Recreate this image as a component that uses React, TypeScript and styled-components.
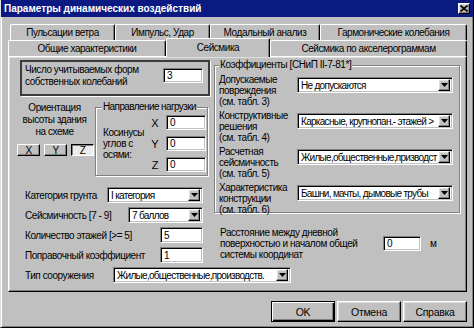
import React from 'react';
import styled, { createGlobalStyle, css } from 'styled-components';

const GlobalStyle = createGlobalStyle`
  html, body { margin: 0; padding: 0; background: #c0c0c0; }
  body { font-family: "Liberation Sans", Arial, sans-serif; font-size: 10px; letter-spacing: -0.45px; color: #000; }
  * { box-sizing: border-box; }
`;

const sunken = css`
  background: #fff;
  border: 1px solid;
  border-color: #808080 #fff #fff #808080;
  box-shadow: inset 1px 1px 0 #000, inset -1px -1px 0 #c0c0c0;
`;

const raised = css`
  background: #c0c0c0;
  border: 1px solid;
  border-color: #fff #000 #000 #fff;
  box-shadow: inset -1px -1px 0 #808080, inset 1px 1px 0 #dfdfdf;
`;

const Window = styled.div`
  width: 474px;
  height: 328px;
  background: #c0c0c0;
  display: flex;
  flex-direction: column;
  border-left: 1px solid #dfdfdf;
  border-right: 1px solid #000;
  border-bottom: 1px solid #000;
  box-shadow: inset 1px 0 0 #fff, inset -1px -1px 0 #808080;
  overflow: hidden;
`;

const TitleBar = styled.div`
  height: 17px;
  flex: none;
  background: #0a1a82;
  color: #fff;
  font-weight: bold;
  font-size: 10px;
  letter-spacing: 0;
  display: flex;
  align-items: center;
  justify-content: space-between;
  padding: 0 3px 0 3px;
`;

const CloseButton = styled.div`
  ${raised};
  width: 12px;
  height: 11px;
  display: flex;
  align-items: center;
  justify-content: center;
`;

const Body = styled.div`
  flex: 1;
  display: flex;
  flex-direction: column;
  padding: 7px 5px 0 7px;
`;

const TabRow = styled.div<{ $indent: number }>`
  display: flex;
  align-items: flex-end;
  height: 16px;
  padding-left: ${p => p.$indent}px;
`;

const Tab = styled.div<{ $w: number; $active?: boolean }>`
  width: ${p => p.$w}px;
  height: ${p => (p.$active ? 19 : 16)}px;
  margin-bottom: ${p => (p.$active ? -1 : 0)}px;
  position: ${p => (p.$active ? 'relative' : 'static')};
  z-index: ${p => (p.$active ? 2 : 'auto')};
  background: #c0c0c0;
  border-top: 1px solid #fff;
  border-left: 1px solid #fff;
  border-right: 1px solid #000;
  border-radius: 2px 2px 0 0;
  box-shadow: inset -1px 0 0 #808080;
  display: flex;
  align-items: center;
  justify-content: center;
  padding-bottom: ${p => (p.$active ? 2 : 0)}px;
  white-space: nowrap;
  font-size: 10px;
`;

const Panel = styled.div`
  width: 459px;
  height: 236px;
  flex: none;
  border-top: 1px solid #fff;
  border-left: 1px solid #fff;
  border-right: 1px solid #000;
  border-bottom: 1px solid #000;
  box-shadow: inset -1px -1px 0 #808080, inset 1px 1px 0 #dfdfdf;
  display: grid;
  grid-template-columns: 190px 246px;
  column-gap: 4px;
  row-gap: 4px;
  align-content: start;
  padding: 3px 0 0 11px;
`;

const Column = styled.div`
  display: flex;
  flex-direction: column;
`;

const FormsBox = styled.div`
  height: 36px;
  border: 2px solid #3c3c3c;
  box-shadow: 1px 1px 0 #fff;
  display: flex;
  justify-content: space-between;
  align-items: flex-start;
  padding: 2px 5px 0 3px;
`;

const Lines = styled.div<{ $lh?: number; $center?: boolean }>`
  line-height: ${p => p.$lh ?? 12}px;
  white-space: nowrap;
  text-align: ${p => (p.$center ? 'center' : 'left')};
`;

const TextField = styled.div<{ $w: number; $h?: number; $mt?: number }>`
  ${sunken};
  width: ${p => p.$w}px;
  height: ${p => p.$h ?? 15}px;
  margin-top: ${p => p.$mt ?? 0}px;
  flex: none;
  padding: 0 3px;
  display: flex;
  align-items: center;
`;

const ComboBox = styled.div<{ $w: number; $mt?: number }>`
  ${sunken};
  width: ${p => p.$w}px;
  height: 16px;
  margin-top: ${p => p.$mt ?? 0}px;
  flex: none;
  display: flex;
  align-items: center;
  padding: 2px 2px 2px 3px;
`;

const ComboValue = styled.span`
  flex: 1;
  overflow: hidden;
  white-space: nowrap;
  letter-spacing: -0.7px;
`;

const DropButton = styled.div`
  ${raised};
  width: 12px;
  height: 12px;
  flex: none;
  display: flex;
  align-items: center;
  justify-content: center;
`;

const MiddleRow = styled.div`
  display: flex;
  margin-top: 4px;
  height: 76px;
`;

const Orientation = styled.div`
  width: 78px;
  margin-left: -3px;
  display: flex;
  flex-direction: column;
  align-items: center;
  padding-top: 2px;
  padding-right: 3px;
`;

const AxisButtons = styled.div`
  display: flex;
  gap: 4px;
  margin-top: 6px;
  align-self: flex-start;
`;

const AxisButton = styled.div<{ $pressed?: boolean }>`
  width: 23px;
  height: 12px;
  display: flex;
  align-items: center;
  justify-content: center;
  border: 1px solid;
  ${p =>
    p.$pressed
      ? css`
          background: #ececec;
          border-color: #000 #fff #fff #000;
          box-shadow: inset 1px 1px 0 #808080;
        `
      : css`
          background: #c0c0c0;
          border-color: #fff #000 #000 #fff;
          box-shadow: inset -1px -1px 0 #808080;
        `}
`;

const Group = styled.fieldset<{ $w: number; $h?: number; $mt?: number }>`
  width: ${p => p.$w}px;
  ${p => (p.$h ? `height: ${p.$h}px;` : '')}
  margin: ${p => p.$mt ?? 0}px 0 0 0;
  border: 1px solid #808080;
  box-shadow: inset 1px 1px 0 #fff, 1px 1px 0 #fff;
  min-width: 0;
`;

const Legend = styled.legend`
  padding: 0 1px;
  line-height: 12px;
  background: #c0c0c0;
  white-space: nowrap;
`;

const DirectionGroup = styled(Group)`
  padding: 2px 4px 1px 6px;
  & > legend {
    letter-spacing: -0.6px;
  }
`;

const DirectionGrid = styled.div`
  display: grid;
  grid-template-columns: 42px 14px 40px;
  grid-template-rows: repeat(3, 15px);
  column-gap: 4px;
  row-gap: 6px;
`;

const CosinesText = styled(Lines)`
  grid-row: 1 / 4;
  grid-column: 1;
  align-self: center;
  padding-left: 1px;
`;

const AxisLetter = styled.div`
  grid-column: 2;
  display: flex;
  align-items: center;
  justify-content: center;
  font-size: 11px;
  letter-spacing: 0;
`;

const FieldRow = styled.div<{ $mt?: number }>`
  display: flex;
  align-items: center;
  justify-content: space-between;
  height: 16px;
  margin-top: ${p => p.$mt ?? 4}px;
  padding: 0 7px 0 5px;
  white-space: nowrap;
`;

const CoefGroup = styled(Group)`
  padding: 3px 6px 0 4px;
  display: flex;
  flex-direction: column;
  gap: 3px;
`;

const CoefRow = styled.div`
  display: grid;
  grid-template-columns: 78px 1fr;
  height: 33px;
  align-items: start;
`;

const DistanceRow = styled.div`
  display: flex;
  align-items: center;
  margin-top: 14px;
  padding-left: 6px;
`;

const DistanceText = styled(Lines)`
  width: 155px;
  margin-right: 8px;
`;

const Unit = styled.span`
  margin-left: 9px;
`;

const TypeRow = styled.div`
  grid-column: 1 / -1;
  display: flex;
  align-items: center;
  height: 16px;
  padding-left: 5px;
`;

const TypeLabel = styled.span`
  width: 88px;
`;

const ButtonBar = styled.div`
  display: flex;
  justify-content: flex-end;
  gap: 2px;
  margin-top: 9px;
  width: 459px;
`;

const DialogButton = styled.div<{ $default?: boolean }>`
  width: 64px;
  height: 21px;
  display: flex;
  align-items: center;
  justify-content: center;
  font-size: 10.5px;
  letter-spacing: -0.3px;
  background: #c0c0c0;
  border: 1px solid;
  ${p =>
    p.$default
      ? css`
          border-color: #000;
          box-shadow: inset 1px 1px 0 #fff, inset -1px -1px 0 #000, inset -2px -2px 0 #808080;
        `
      : css`
          border-color: #fff #000 #000 #fff;
          box-shadow: inset -1px -1px 0 #808080, inset 1px 1px 0 #dfdfdf;
        `}
`;

const Arrow = () => (
  <svg width="7" height="4" viewBox="0 0 7 4">
    <polygon points="0,0 7,0 3.5,4" fill="#000" />
  </svg>
);

const CloseIcon = () => (
  <svg width="8" height="7" viewBox="0 0 8 7">
    <path d="M0.5 0.5 L7.5 6.5 M7.5 0.5 L0.5 6.5" stroke="#000" strokeWidth="1.6" />
  </svg>
);

const Combo: React.FC<{ w: number; value: string; mt?: number }> = ({ w, value, mt }) => (
  <ComboBox $w={w} $mt={mt}>
    <ComboValue>{value}</ComboValue>
    <DropButton>
      <Arrow />
    </DropButton>
  </ComboBox>
);

const coefRows = [
  { label: ['Допускаемые', 'повреждения', '(см.  табл. 3)'], value: 'Не допускаются' },
  { label: ['Конструктивные', 'решения', '(см. табл. 4)'], value: 'Каркасные, крупнопан.- этажей >' },
  { label: ['Расчетная', 'сейсмичность', '(см. табл. 5)'], value: 'Жилые,общественные,призводст' },
  { label: ['Характеристика', 'конструкции', '(см. табл. 6)'], value: 'Башни, мачты, дымовые трубы' },
];

export default function App() {
  return (
    <>
      <GlobalStyle />
      <Window>
        <TitleBar>
          <span>Параметры динамических воздействий</span>
          <CloseButton>
            <CloseIcon />
          </CloseButton>
        </TitleBar>
        <Body>
          <TabRow $indent={2}>
            <Tab $w={105}>Пульсации ветра</Tab>
            <Tab $w={95}>Импульс, Удар</Tab>
            <Tab $w={110}>Модальный анализ</Tab>
            <Tab $w={147}>Гармонические колебания</Tab>
          </TabRow>
          <TabRow $indent={0}>
            <Tab $w={158}>Общие характеристики</Tab>
            <Tab $w={104} $active>
              Сейсмика
            </Tab>
            <Tab $w={197}>Сейсмика по акселерограммам</Tab>
          </TabRow>
          <Panel>
            <Column>
              <FormsBox>
                <Lines>
                  Число учитываемых форм
                  <br />
                  собственных колебаний
                </Lines>
                <TextField $w={40} $mt={4}>
                  3
                </TextField>
              </FormsBox>
              <MiddleRow>
                <Orientation>
                  <Lines $center>
                    Ориентация
                    <br />
                    высоты здания
                    <br />
                    на схеме
                  </Lines>
                  <AxisButtons>
                    <AxisButton>X</AxisButton>
                    <AxisButton>Y</AxisButton>
                    <AxisButton $pressed>Z</AxisButton>
                  </AxisButtons>
                </Orientation>
                <DirectionGroup $w={113} $mt={1}>
                  <Legend>Направление нагрузки</Legend>
                  <DirectionGrid>
                    <CosinesText $lh={11}>
                      Косинусы
                      <br />
                      углов с
                      <br />
                      осями:
                    </CosinesText>
                    <AxisLetter>X</AxisLetter>
                    <TextField $w={40}>0</TextField>
                    <AxisLetter>Y</AxisLetter>
                    <TextField $w={40}>0</TextField>
                    <AxisLetter>Z</AxisLetter>
                    <TextField $w={40}>0</TextField>
                  </DirectionGrid>
                </DirectionGroup>
              </MiddleRow>
              <FieldRow $mt={11}>
                <span>Категория грунта</span>
                <Combo w={96} value="I категория" />
              </FieldRow>
              <FieldRow>
                <span>Сейсмичность [7 - 9]</span>
                <Combo w={75} value="7 баллов" />
              </FieldRow>
              <FieldRow>
                <span>Количество этажей [&gt;= 5]</span>
                <TextField $w={43} $h={16}>
                  5
                </TextField>
              </FieldRow>
              <FieldRow>
                <span>Поправочный коэффициент</span>
                <TextField $w={43} $h={16}>
                  1
                </TextField>
              </FieldRow>
            </Column>
            <Column>
              <CoefGroup $w={246} $h={154} $mt={-1}>
                <Legend>Коэффициенты [СНиП II-7-81*]</Legend>
                {coefRows.map(r => (
                  <CoefRow key={r.value}>
                    <Lines $lh={11}>
                      {r.label[0]}
                      <br />
                      {r.label[1]}
                      <br />
                      {r.label[2]}
                    </Lines>
                    <Combo w={156} value={r.value} mt={3} />
                  </CoefRow>
                ))}
              </CoefGroup>
              <DistanceRow>
                <DistanceText $lh={11}>
                  Расстояние между дневной
                  <br />
                  поверхностью и началом общей
                  <br />
                  системы координат
                </DistanceText>
                <TextField $w={38}>0</TextField>
                <Unit>м</Unit>
              </DistanceRow>
            </Column>
            <TypeRow>
              <TypeLabel>Тип сооружения</TypeLabel>
              <Combo w={178} value="Жилые,общественные,производств." />
            </TypeRow>
          </Panel>
          <ButtonBar>
            <DialogButton $default>OK</DialogButton>
            <DialogButton>Отмена</DialogButton>
            <DialogButton>Справка</DialogButton>
          </ButtonBar>
        </Body>
      </Window>
    </>
  );
}
